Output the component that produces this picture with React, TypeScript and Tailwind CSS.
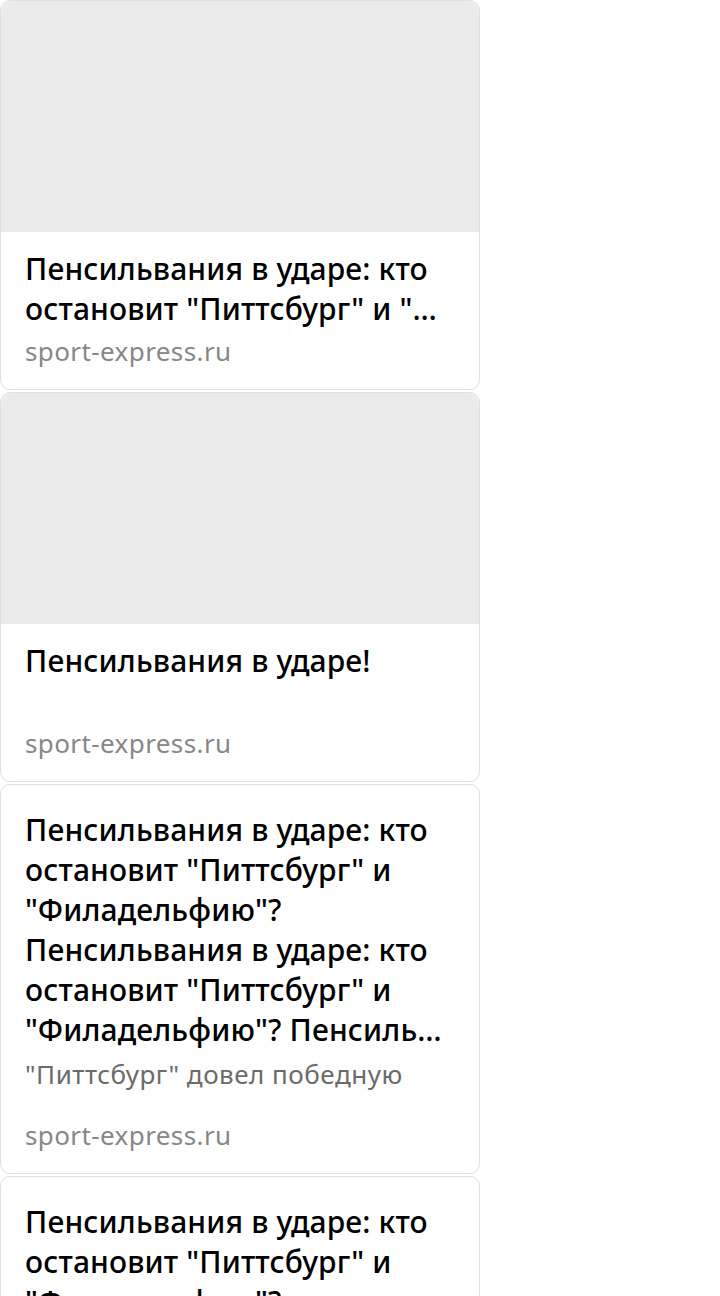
import React from 'react'

interface NewsItem {
  title: string
  snippet?: string
  source: string
  image?: boolean
  lines: number
}

const longTitle =
  'Пенсильвания в ударе: кто остановит "Питтсбург" и "Филадельфию"? Пенсильвания в ударе: кто остановит "Питтсбург" и "Филадельфию"? Пенсиль…'

const items: NewsItem[] = [
  { title: 'Пенсильвания в ударе: кто остановит "Питтсбург" и "…', source: 'sport-express.ru', image: true, lines: 2 },
  { title: 'Пенсильвания в ударе!', source: 'sport-express.ru', image: true, lines: 2 },
  { title: longTitle, snippet: '"Питтсбург" довел победную', source: 'sport-express.ru', lines: 6 },
  { title: longTitle, snippet: '"Питтсбург" довел победную', source: 'sport-express.ru', lines: 6 },
]

const NewsCard: React.FC<{ item: NewsItem }> = ({ item }) => {
  return (
    <div className="flex h-[390px] w-[480px] shrink-0 flex-col overflow-hidden rounded-[10px] border border-[#e0e0e0] bg-white">
      {item.image && <div className="h-[231px] shrink-0 bg-[#ebebeb]" />}
      <div className={`flex flex-1 flex-col px-6 pb-[22px] ${item.image ? 'pt-[17px]' : 'pt-[25px]'}`}>
        <p
          className={`overflow-hidden text-[30px] leading-[40px] tracking-[0.15px] font-medium text-black ${
            item.lines === 6 ? 'max-h-[240px]' : 'max-h-[80px]'
          }`}
        >
          {item.title}
        </p>
        {item.snippet && (
          <p className="mt-2 whitespace-nowrap text-[26px] leading-[32px] tracking-[0.5px] text-[#6b6b6b]">
            {item.snippet}
          </p>
        )}
        <p className="mt-auto text-[26px] leading-[32px] tracking-[0.4px] text-[#878787]">{item.source}</p>
      </div>
    </div>
  )
}

export default function App() {
  return (
    <div className="flex h-[1296px] w-[720px] flex-col gap-[2px] overflow-hidden bg-white font-['Noto_Sans',sans-serif]">
      {items.map((item, i) => (
        <NewsCard key={i} item={item} />
      ))}
    </div>
  )
}
